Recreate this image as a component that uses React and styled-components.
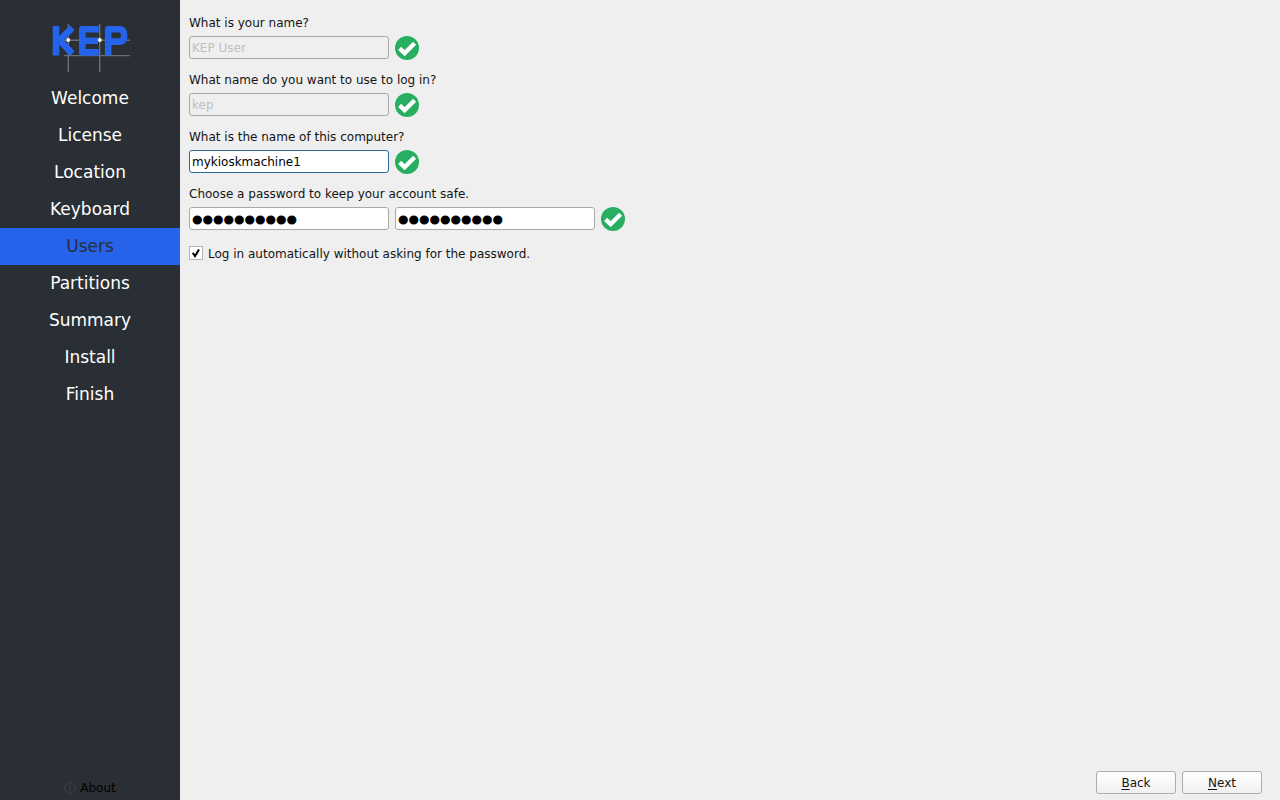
import React, { useState } from 'react';
import styled, { createGlobalStyle } from 'styled-components';

const GlobalStyle = createGlobalStyle`
  * {
    box-sizing: border-box;
  }
  body {
    margin: 0;
    background-color: #efefef;
    color: #141414;
    font-family: 'DejaVu Sans', sans-serif;
    font-size: 12px;
    line-height: 16px;
  }
`;

const Window = styled.div`
  display: flex;
  min-height: 100vh;
`;

const Sidebar = styled.aside`
  display: flex;
  flex-direction: column;
  flex: 0 0 180px;
  background-color: #292f34;
`;

const LogoBox = styled.div`
  display: flex;
  justify-content: center;
  height: 80px;
  padding-top: 24px;
`;

const Steps = styled.ol`
  flex: 1;
  margin: 0;
  padding: 0;
  list-style: none;
`;

const Step = styled.li`
  height: 37px;
  line-height: 36px;
  font-size: 17px;
  text-align: center;
  color: ${props => (props.$active ? '#292f34' : '#ffffff')};
  background-color: ${props => (props.$active ? '#2563eb' : 'transparent')};
`;

const AboutButton = styled.button`
  display: flex;
  align-items: center;
  justify-content: center;
  gap: 4px;
  height: 24px;
  padding: 0;
  border: 0;
  background: none;
  color: #000000;
  font: inherit;

  svg {
    color: #3d4347;
  }
`;

const Main = styled.main`
  display: flex;
  flex-direction: column;
  flex: 1;
`;

const Form = styled.form`
  display: flex;
  flex-direction: column;
  flex: 1;
  gap: 12px;
  padding: 15px 9px;
`;

const Field = styled.div`
  display: flex;
  flex-direction: column;
  gap: 5px;
`;

const InputRow = styled.div`
  display: flex;
  align-items: flex-start;
  gap: 6px;
  height: 24px;
`;

const TextInput = styled.input`
  width: 200px;
  height: 23px;
  padding: 0 2px;
  border: 1px solid #a9a9a9;
  border-radius: 3px;
  outline: none;
  background-color: #ffffff;
  color: #000000;
  font: inherit;

  &:disabled {
    background-color: #efefef;
    color: #bebebe;
  }
  &:focus {
    border-color: #306998;
  }
`;

const PasswordInput = styled(TextInput)`
  padding-top: 2px;
  font-family: 'Liberation Sans', sans-serif;
  font-size: 30px;
  -webkit-text-stroke: 1px #000000;
`;

const CheckLabel = styled.label`
  display: flex;
  align-items: flex-start;
  align-self: flex-start;
  gap: 5px;
  margin-top: 3px;
`;

const CheckBox = styled.input`
  appearance: none;
  width: 14px;
  height: 14px;
  margin: 0;
  border: 1px solid #b4b4b4;
  background-color: #ffffff;

  &:checked {
    background-image: url("data:image/svg+xml,%3Csvg xmlns='http://www.w3.org/2000/svg' viewBox='0 0 12 12'%3E%3Cpath d='M2.8 5.8L5 9.2L9 2.4' fill='none' stroke='%23000' stroke-width='2'/%3E%3C/svg%3E");
  }
`;

const Footer = styled.footer`
  display: flex;
  justify-content: flex-end;
  gap: 6px;
  padding: 0 18px 6px;
`;

const NavButton = styled.button`
  width: 80px;
  height: 23px;
  padding: 1px 0 0;
  border: 1px solid #adadad;
  border-radius: 3px;
  background: linear-gradient(#ffffff, #f0f0f0);
  color: #141414;
  font: inherit;

  u {
    text-underline-offset: 2px;
  }
`;

const Logo = () => (
  <svg width="80" height="48" viewBox="50 24 80 48" role="img" aria-label="KEP">
    <g fill="none" stroke="#6a6f73" strokeWidth="1.4">
      <path d="M68.3 24V72M99.7 24V72M62 40.2H130M64 55.6H130" />
    </g>
    <g fill="none" stroke="#2563eb" strokeWidth="6.6" strokeLinejoin="round">
      <path d="M56 26V55.6M72.3 27.6L59.5 40.3L72.3 53.6" />
      <path d="M98.8 29.2H82.3V52.4H98.8M82.3 40.7H98" />
      <path d="M108.2 55.6V29.2H119Q124.2 29.2 124.2 35.4Q124.2 41.6 119 41.6H108.2" />
    </g>
    <circle cx="68.2" cy="40" r="1.9" fill="#ffffff" />
    <circle cx="99.8" cy="40" r="1.9" fill="#ffffff" />
  </svg>
);

const ValidMark = () => (
  <svg width="24" height="24" viewBox="0 0 24 24" aria-hidden="true">
    <circle cx="12" cy="12" r="12" fill="#27ae60" />
    <path d="M4.6 12.4L9.6 17.2L19.6 7.2" fill="none" stroke="#ffffff" strokeWidth="4.4" />
  </svg>
);

const InfoIcon = () => (
  <svg width="12" height="12" viewBox="0 0 12 12" fill="none" stroke="currentColor" aria-hidden="true">
    <circle cx="6" cy="6" r="5.5" />
    <path d="M6 5V9.5M6 2.5V4" />
  </svg>
);

const steps = [
  'Welcome',
  'License',
  'Location',
  'Keyboard',
  'Users',
  'Partitions',
  'Summary',
  'Install',
  'Finish',
];

export default function App() {
  const [hostname, setHostname] = useState('mykioskmachine1');
  const [password, setPassword] = useState('kioskadmin');
  const [repeated, setRepeated] = useState('kioskadmin');
  const [autoLogin, setAutoLogin] = useState(true);

  return (
    <Window>
      <GlobalStyle />
      <Sidebar>
        <LogoBox>
          <Logo />
        </LogoBox>
        <Steps>
          {steps.map(step => (
            <Step key={step} $active={step === 'Users'}>{step}</Step>
          ))}
        </Steps>
        <AboutButton type="button">
          <InfoIcon />
          About
        </AboutButton>
      </Sidebar>

      <Main>
        <Form>
          <Field>
            <label htmlFor="fullname">What is your name?</label>
            <InputRow>
              <TextInput id="fullname" defaultValue="KEP User" disabled />
              <ValidMark />
            </InputRow>
          </Field>
          <Field>
            <label htmlFor="login">What name do you want to use to log in?</label>
            <InputRow>
              <TextInput id="login" defaultValue="kep" disabled />
              <ValidMark />
            </InputRow>
          </Field>
          <Field>
            <label htmlFor="hostname">What is the name of this computer?</label>
            <InputRow>
              <TextInput
                id="hostname"
                value={hostname}
                onChange={e => setHostname(e.target.value)}
                spellCheck={false}
                autoFocus
              />
              <ValidMark />
            </InputRow>
          </Field>
          <Field>
            <label htmlFor="password">Choose a password to keep your account safe.</label>
            <InputRow>
              <PasswordInput
                id="password"
                type="password"
                value={password}
                onChange={e => setPassword(e.target.value)}
              />
              <PasswordInput
                type="password"
                aria-label="Repeat password"
                value={repeated}
                onChange={e => setRepeated(e.target.value)}
              />
              <ValidMark />
            </InputRow>
          </Field>
          <CheckLabel>
            <CheckBox
              type="checkbox"
              checked={autoLogin}
              onChange={e => setAutoLogin(e.target.checked)}
            />
            Log in automatically without asking for the password.
          </CheckLabel>
        </Form>
        <Footer>
          <NavButton type="button"><u>B</u>ack</NavButton>
          <NavButton type="button"><u>N</u>ext</NavButton>
        </Footer>
      </Main>
    </Window>
  );
}
